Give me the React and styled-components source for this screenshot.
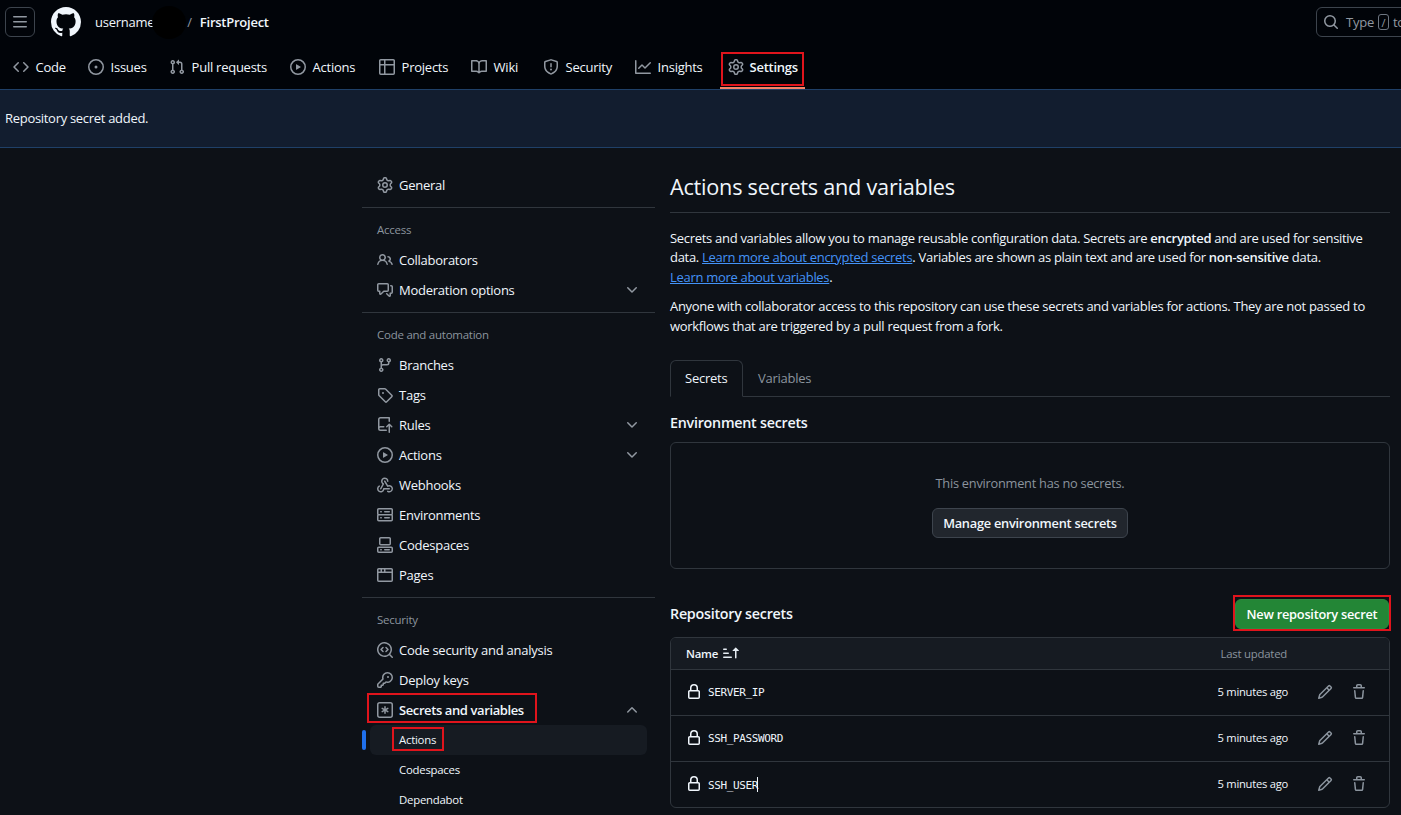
import React from "react";
import styled, { createGlobalStyle } from "styled-components";

const FONT = `"Open Sans", "Noto Sans", sans-serif`;
const RED = "#e0141c";

const octicon = (...paths) => ({ size = 16 }) => (
  <svg width={size} height={size} viewBox="0 0 16 16" fill="currentColor">
    {paths.map((d) => <path key={d} d={d} />)}
  </svg>
);
const ThreeBars = octicon("M1 2.75A.75.75 0 0 1 1.75 2h12.5a.75.75 0 0 1 0 1.5H1.75A.75.75 0 0 1 1 2.75Zm0 5A.75.75 0 0 1 1.75 7h12.5a.75.75 0 0 1 0 1.5H1.75A.75.75 0 0 1 1 7.75ZM1.75 12h12.5a.75.75 0 0 1 0 1.5H1.75a.75.75 0 0 1 0-1.5Z");
const MarkGithub = octicon("M8 0c4.42 0 8 3.58 8 8a8.013 8.013 0 0 1-5.45 7.59c-.4.08-.55-.17-.55-.38 0-.27.01-1.13.01-2.2 0-.75-.25-1.23-.54-1.48 1.78-.2 3.65-.88 3.65-3.95 0-.88-.31-1.59-.82-2.15.08-.2.36-1.02-.08-2.12 0 0-.67-.22-2.2.82-.64-.18-1.32-.27-2-.27-.68 0-1.36.09-2 .27-1.53-1.03-2.2-.82-2.2-.82-.44 1.1-.16 1.92-.08 2.12-.51.56-.82 1.28-.82 2.15 0 3.06 1.86 3.75 3.64 3.95-.23.2-.44.55-.51 1.07-.46.21-1.61.55-2.33-.66-.15-.24-.6-.83-1.23-.82-.67.01-.27.38.01.53.34.19.73.9.82 1.13.16.45.68 1.31 2.69.94 0 .67.01 1.3.01 1.49 0 .21-.15.45-.55.38A7.995 7.995 0 0 1 0 8c0-4.42 3.58-8 8-8Z");
const Webhook = octicon(
  "M5.5 4.25a2.25 2.25 0 0 1 4.5 0 .75.75 0 0 0 1.5 0 3.75 3.75 0 1 0-6.14 2.889l-2.272 4.258a.75.75 0 0 0 1.324.706L7 7.25a.75.75 0 0 0-.309-1.015A2.25 2.25 0 0 1 5.5 4.25Z",
  "M7.364 3.607a.75.75 0 0 1 1.03.257l2.608 4.349a3.75 3.75 0 1 1-.628 6.785.75.75 0 0 1 .752-1.299 2.25 2.25 0 1 0-.033-3.88.75.75 0 0 1-1.03-.256L7.107 4.636a.75.75 0 0 1 .257-1.03Z",
  "M2.9 8.776A.75.75 0 0 1 2.625 9.8 2.25 2.25 0 1 0 6 11.75a.75.75 0 0 1 .75-.751h5.5a.75.75 0 0 1 0 1.5H7.425a3.751 3.751 0 1 1-5.55-3.998.75.75 0 0 1 1.024.274Z"
);
const KeyAsterisk = octicon(
  "M0 2.75A2.75 2.75 0 0 1 2.75 0h10.5A2.75 2.75 0 0 1 16 2.75v10.5A2.75 2.75 0 0 1 13.25 16H2.75A2.75 2.75 0 0 1 0 13.25ZM2.75 1.5c-.69 0-1.25.56-1.25 1.25v10.5c0 .69.56 1.25 1.25 1.25h10.5c.69 0 1.25-.56 1.25-1.25V2.75c0-.69-.56-1.25-1.25-1.25Z",
  "M8 4a.75.75 0 0 1 .75.75V6.7l1.69-.975a.75.75 0 0 1 .75 1.3L9.5 8l1.69.976a.75.75 0 0 1-.75 1.298L8.75 9.3v1.951a.75.75 0 0 1-1.5 0V9.3l-1.69.975a.75.75 0 0 1-.75-1.299L6.5 8l-1.69-.975a.75.75 0 0 1 .75-1.3l1.69.976V4.75A.75.75 0 0 1 8 4Z"
);
const Gear = octicon("M8 0a8.2 8.2 0 0 1 .701.031C9.444.095 9.99.645 10.16 1.29l.288 1.107c.018.066.079.158.212.224.231.114.454.243.668.386.123.082.233.09.299.071l1.103-.303c.644-.176 1.392.021 1.82.63.27.385.506.792.704 1.218.315.675.111 1.422-.364 1.891l-.814.806c-.049.048-.098.147-.088.294.016.257.016.515 0 .772-.01.147.038.246.088.294l.814.806c.475.469.679 1.216.364 1.891a7.977 7.977 0 0 1-.704 1.217c-.428.61-1.176.807-1.82.63l-1.102-.302c-.067-.019-.177-.011-.3.071a5.909 5.909 0 0 1-.668.386c-.133.066-.194.158-.211.224l-.29 1.106c-.168.646-.715 1.196-1.458 1.26a8.006 8.006 0 0 1-1.402 0c-.743-.064-1.289-.614-1.458-1.26l-.289-1.106c-.018-.066-.079-.158-.212-.224a5.738 5.738 0 0 1-.668-.386c-.123-.082-.233-.09-.299-.071l-1.103.303c-.644.176-1.392-.021-1.82-.63a8.12 8.12 0 0 1-.704-1.218c-.315-.675-.111-1.422.363-1.891l.815-.806c.05-.048.098-.147.088-.294a6.214 6.214 0 0 1 0-.772c.01-.147-.038-.246-.088-.294l-.815-.806C.635 6.045.431 5.298.746 4.623a7.92 7.92 0 0 1 .704-1.217c.428-.61 1.176-.807 1.82-.63l1.102.302c.067.019.177.011.3-.071.214-.143.437-.272.668-.386.133-.066.194-.158.211-.224l.29-1.106C6.009.645 6.556.095 7.299.03 7.53.01 7.764 0 8 0Zm-.571 1.525c-.036.003-.108.036-.137.146l-.289 1.105c-.147.561-.549.967-.998 1.189-.173.086-.34.183-.5.29-.417.278-.97.423-1.529.27l-1.103-.303c-.109-.03-.175.016-.195.045-.22.312-.412.644-.573.99-.014.031-.021.11.059.19l.815.806c.411.406.562.957.53 1.456a4.709 4.709 0 0 0 0 .582c.032.499-.119 1.05-.53 1.456l-.815.806c-.081.08-.073.159-.059.19.162.346.353.677.573.989.02.03.085.076.195.046l1.102-.303c.56-.153 1.113-.008 1.53.27.161.107.328.204.501.29.447.222.85.629.997 1.189l.289 1.105c.029.109.101.143.137.146a6.6 6.6 0 0 0 1.142 0c.036-.003.108-.036.137-.146l.289-1.105c.147-.561.549-.967.998-1.189.173-.086.34-.183.5-.29.417-.278.97-.423 1.529-.27l1.103.303c.109.029.175-.016.195-.045.22-.313.411-.644.573-.99.014-.031.021-.11-.059-.19l-.815-.806c-.411-.406-.562-.957-.53-1.456a4.709 4.709 0 0 0 0-.582c-.032-.499.119-1.05.53-1.456l.815-.806c.081-.08.073-.159.059-.19a6.464 6.464 0 0 0-.573-.989c-.02-.03-.085-.076-.195-.046l-1.102.303c-.56.153-1.113.008-1.53-.27a4.44 4.44 0 0 0-.501-.29c-.447-.222-.85-.629-.997-1.189l-.289-1.105c-.029-.11-.101-.143-.137-.146a6.6 6.6 0 0 0-1.142 0ZM11 8a3 3 0 1 1-6 0 3 3 0 0 1 6 0ZM9.5 8a1.5 1.5 0 1 0-3.001.001A1.5 1.5 0 0 0 9.5 8Z");
const Code = octicon("m11.28 3.22 4.25 4.25a.75.75 0 0 1 0 1.06l-4.25 4.25a.749.749 0 0 1-1.275-.326.749.749 0 0 1 .215-.734L13.94 8l-3.72-3.72a.749.749 0 0 1 .326-1.275.749.749 0 0 1 .734.215Zm-6.56 0a.751.751 0 0 1 1.042.018.751.751 0 0 1 .018 1.042L2.06 8l3.72 3.72a.749.749 0 0 1-.326 1.275.749.749 0 0 1-.734-.215L.47 8.53a.75.75 0 0 1 0-1.06Z");
const IssueOpened = octicon("M8 9.5a1.5 1.5 0 1 0 0-3 1.5 1.5 0 0 0 0 3Z", "M8 0a8 8 0 1 1 0 16A8 8 0 0 1 8 0ZM1.5 8a6.5 6.5 0 1 0 13 0 6.5 6.5 0 0 0-13 0Z");
const PullRequest = octicon("M1.5 3.25a2.25 2.25 0 1 1 3 2.122v5.256a2.251 2.251 0 1 1-1.5 0V5.372A2.25 2.25 0 0 1 1.5 3.25Zm5.677-.177L9.573.677A.25.25 0 0 1 10 .854V2.5h1A2.5 2.5 0 0 1 13.5 5v5.628a2.251 2.251 0 1 1-1.5 0V5a1 1 0 0 0-1-1h-1v1.646a.25.25 0 0 1-.427.177L7.177 3.427a.25.25 0 0 1 0-.354ZM3.75 2.5a.75.75 0 1 0 0 1.5.75.75 0 0 0 0-1.5Zm0 9.5a.75.75 0 1 0 0 1.5.75.75 0 0 0 0-1.5Zm8.25.75a.75.75 0 1 0 1.5 0 .75.75 0 0 0-1.5 0Z");
const Play = octicon("M8 0a8 8 0 1 1 0 16A8 8 0 0 1 8 0ZM1.5 8a6.5 6.5 0 1 0 13 0 6.5 6.5 0 0 0-13 0Zm4.879-2.773 4.264 2.559a.25.25 0 0 1 0 .428l-4.264 2.559A.25.25 0 0 1 6 10.559V5.442a.25.25 0 0 1 .379-.215Z");
const Table = octicon("M0 1.75C0 .784.784 0 1.75 0h12.5C15.216 0 16 .784 16 1.75v12.5A1.75 1.75 0 0 1 14.25 16H1.75A1.75 1.75 0 0 1 0 14.25ZM6.5 6.5v8h7.75a.25.25 0 0 0 .25-.25V6.5Zm8-1.5V1.75a.25.25 0 0 0-.25-.25H6.5V5Zm-13 1.5v7.75c0 .138.112.25.25.25H5v-8ZM5 5V1.5H1.75a.25.25 0 0 0-.25.25V5Z");
const Book = octicon("M0 1.75A.75.75 0 0 1 .75 1h4.253c1.227 0 2.317.59 3 1.501A3.743 3.743 0 0 1 11.006 1h4.245a.75.75 0 0 1 .75.75v10.5a.75.75 0 0 1-.75.75h-4.507a2.25 2.25 0 0 0-1.591.659l-.622.621a.75.75 0 0 1-1.06 0l-.622-.621A2.25 2.25 0 0 0 5.258 13H.75a.75.75 0 0 1-.75-.75Zm7.251 10.324.004-5.073-.002-2.253A2.25 2.25 0 0 0 5.003 2.5H1.5v9h3.757a3.75 3.75 0 0 1 1.994.574ZM8.755 4.75l-.004 7.322a3.752 3.752 0 0 1 1.992-.572H14.5v-9h-3.495a2.25 2.25 0 0 0-2.25 2.25Z");
const Shield = octicon("M7.467.133a1.748 1.748 0 0 1 1.066 0l5.25 1.68A1.75 1.75 0 0 1 15 3.48V7c0 1.566-.32 3.182-1.303 4.682-.983 1.498-2.585 2.813-5.032 3.855a1.697 1.697 0 0 1-1.33 0c-2.447-1.042-4.049-2.357-5.032-3.855C1.32 10.182 1 8.566 1 7V3.48a1.75 1.75 0 0 1 1.217-1.667Zm.61 1.429a.25.25 0 0 0-.153 0l-5.25 1.68a.25.25 0 0 0-.174.238V7c0 1.358.275 2.666 1.057 3.86.784 1.194 2.121 2.34 4.366 3.297a.196.196 0 0 0 .154 0c2.245-.956 3.582-2.104 4.366-3.298C13.225 9.666 13.5 8.36 13.5 7V3.48a.251.251 0 0 0-.174-.237l-5.25-1.68ZM8.75 4.75v3a.75.75 0 0 1-1.5 0v-3a.75.75 0 0 1 1.5 0ZM9 10.5a1 1 0 1 1-2 0 1 1 0 0 1 2 0Z");
const Graph = octicon("M1.5 1.75V13.5h13.75a.75.75 0 0 1 0 1.5H.75a.75.75 0 0 1-.75-.75V1.75a.75.75 0 0 1 1.5 0Zm14.28 2.53-5.25 5.25a.75.75 0 0 1-1.06 0L7 7.06 4.28 9.78a.751.751 0 0 1-1.042-.018.751.751 0 0 1-.018-1.042l3.25-3.25a.75.75 0 0 1 1.06 0L10 7.94l4.72-4.72a.751.751 0 0 1 1.042.018.751.751 0 0 1 .018 1.042Z");
const People = octicon("M2 5.5a3.5 3.5 0 1 1 5.898 2.549 5.508 5.508 0 0 1 3.034 4.084.75.75 0 1 1-1.482.235 4 4 0 0 0-7.9 0 .75.75 0 0 1-1.482-.236A5.507 5.507 0 0 1 3.102 8.05 3.493 3.493 0 0 1 2 5.5ZM11 4a3.001 3.001 0 0 1 2.22 5.018 5.01 5.01 0 0 1 2.56 3.012.749.749 0 0 1-.885.954.752.752 0 0 1-.549-.514 3.507 3.507 0 0 0-2.522-2.372.75.75 0 0 1-.574-.73v-.352a.75.75 0 0 1 .416-.672A1.5 1.5 0 0 0 11 5.5.75.75 0 0 1 11 4Zm-5.5-.5a2 2 0 1 0-.001 3.999A2 2 0 0 0 5.5 3.5Z");
const CommentDiscussion = octicon("M1.75 1h8.5c.966 0 1.75.784 1.75 1.75v5.5A1.75 1.75 0 0 1 10.25 10H7.061l-2.574 2.573A1.458 1.458 0 0 1 2 11.543V10h-.25A1.75 1.75 0 0 1 0 8.25v-5.5C0 1.784.784 1 1.75 1ZM1.5 2.75v5.5c0 .138.112.25.25.25h1a.75.75 0 0 1 .75.75v2.19l2.72-2.72a.749.749 0 0 1 .53-.22h3.5a.25.25 0 0 0 .25-.25v-5.5a.25.25 0 0 0-.25-.25h-8.5a.25.25 0 0 0-.25.25Zm13 2a.25.25 0 0 0-.25-.25h-.5a.75.75 0 0 1 0-1.5h.5c.966 0 1.75.784 1.75 1.75v5.5A1.75 1.75 0 0 1 14.25 12H14v1.543a1.458 1.458 0 0 1-2.487 1.03L9.22 12.28a.749.749 0 0 1 .326-1.275.749.749 0 0 1 .734.215l2.22 2.22v-2.19a.75.75 0 0 1 .75-.75h1a.25.25 0 0 0 .25-.25Z");
const GitBranch = octicon("M9.5 3.25a2.25 2.25 0 1 1 3 2.122V6A2.5 2.5 0 0 1 10 8.5H6a1 1 0 0 0-1 1v1.128a2.251 2.251 0 1 1-1.5 0V5.372a2.25 2.25 0 1 1 1.5 0v1.836A2.493 2.493 0 0 1 6 7h4a1 1 0 0 0 1-1v-.628A2.25 2.25 0 0 1 9.5 3.25Zm-6 0a.75.75 0 1 0 1.5 0 .75.75 0 0 0-1.5 0Zm8.25-.75a.75.75 0 1 0 0 1.5.75.75 0 0 0 0-1.5ZM4.25 12a.75.75 0 1 0 0 1.5.75.75 0 0 0 0-1.5Z");
const Tag = octicon("M1 7.775V2.75C1 1.784 1.784 1 2.75 1h5.025c.464 0 .91.184 1.238.513l6.25 6.25a1.75 1.75 0 0 1 0 2.474l-5.026 5.026a1.75 1.75 0 0 1-2.474 0l-6.25-6.25A1.752 1.752 0 0 1 1 7.775Zm1.5 0c0 .066.026.13.073.177l6.25 6.25a.25.25 0 0 0 .354 0l5.025-5.025a.25.25 0 0 0 0-.354l-6.25-6.25a.25.25 0 0 0-.177-.073H2.75a.25.25 0 0 0-.25.25ZM6 5a1 1 0 1 1 0 2 1 1 0 0 1 0-2Z");
const RepoPush = octicon("M1 2.5A2.5 2.5 0 0 1 3.5 0h8.75a.75.75 0 0 1 .75.75v3.5a.75.75 0 0 1-1.5 0V1.5h-8a1 1 0 0 0-1 1v6.708A2.493 2.493 0 0 1 3.5 9h3.25a.75.75 0 0 1 0 1.5H3.5a1 1 0 0 0 0 2h5.75a.75.75 0 0 1 0 1.5H3.5A2.5 2.5 0 0 1 1 11.5Zm13.23 7.79h-.001l-1.224-1.224v6.184a.75.75 0 0 1-1.5 0V9.066L10.28 10.29a.75.75 0 0 1-1.06-1.061l2.505-2.504a.75.75 0 0 1 1.06 0L15.29 9.23a.751.751 0 0 1-.018 1.042.751.751 0 0 1-1.042.018Z");
const Server = octicon("M1.75 1h12.5c.966 0 1.75.784 1.75 1.75v4c0 .372-.116.717-.314 1 .198.283.314.628.314 1v4a1.75 1.75 0 0 1-1.75 1.75H1.75A1.75 1.75 0 0 1 0 12.75v-4c0-.358.109-.707.314-1a1.739 1.739 0 0 1-.314-1v-4C0 1.784.784 1 1.75 1ZM1.5 2.75v4c0 .138.112.25.25.25h12.5a.25.25 0 0 0 .25-.25v-4a.25.25 0 0 0-.25-.25H1.75a.25.25 0 0 0-.25.25Zm.25 5.75a.25.25 0 0 0-.25.25v4c0 .138.112.25.25.25h12.5a.25.25 0 0 0 .25-.25v-4a.25.25 0 0 0-.25-.25ZM7 4.75A.75.75 0 0 1 7.75 4h4.5a.75.75 0 0 1 0 1.5h-4.5A.75.75 0 0 1 7 4.75ZM7.75 10h4.5a.75.75 0 0 1 0 1.5h-4.5a.75.75 0 0 1 0-1.5ZM3 4.75A.75.75 0 0 1 3.75 4h.5a.75.75 0 0 1 0 1.5h-.5A.75.75 0 0 1 3 4.75ZM3.75 10h.5a.75.75 0 0 1 0 1.5h-.5a.75.75 0 0 1 0-1.5Z");
const Codespaces = octicon(
  "M0 11.25c0-.966.784-1.75 1.75-1.75h12.5c.966 0 1.75.784 1.75 1.75v3A1.75 1.75 0 0 1 14.25 16H1.75A1.75 1.75 0 0 1 0 14.25Zm2-9.5C2 .784 2.784 0 3.75 0h8.5C13.216 0 14 .784 14 1.75v5a1.75 1.75 0 0 1-1.75 1.75h-8.5A1.75 1.75 0 0 1 2 6.75Zm1.75-.25a.25.25 0 0 0-.25.25v5c0 .138.112.25.25.25h8.5a.25.25 0 0 0 .25-.25v-5a.25.25 0 0 0-.25-.25Zm-2 9.5a.25.25 0 0 0-.25.25v3c0 .138.112.25.25.25h12.5a.25.25 0 0 0 .25-.25v-3a.25.25 0 0 0-.25-.25Z",
  "M7 12.75a.75.75 0 0 1 .75-.75h4.5a.75.75 0 0 1 0 1.5h-4.5a.75.75 0 0 1-.75-.75Zm-4 0a.75.75 0 0 1 .75-.75h.5a.75.75 0 0 1 0 1.5h-.5a.75.75 0 0 1-.75-.75Z"
);
const Browser = octicon("M0 2.75C0 1.784.784 1 1.75 1h12.5c.966 0 1.75.784 1.75 1.75v10.5A1.75 1.75 0 0 1 14.25 15H1.75A1.75 1.75 0 0 1 0 13.25ZM14.5 6h-13v7.25c0 .138.112.25.25.25h12.5a.25.25 0 0 0 .25-.25Zm-6-3.5v2h6V2.75a.25.25 0 0 0-.25-.25ZM5 2.5v2h2v-2Zm-3.25 0a.25.25 0 0 0-.25.25V4.5h2v-2Z");
const Codescan = octicon(
  "M8.47 4.97a.75.75 0 0 0 0 1.06L9.94 7.5 8.47 8.97a.75.75 0 1 0 1.06 1.06l2-2a.75.75 0 0 0 0-1.06l-2-2a.75.75 0 0 0-1.06 0ZM6.53 6.03a.75.75 0 0 0-1.06-1.06l-2 2a.75.75 0 0 0 0 1.06l2 2a.75.75 0 1 0 1.06-1.06L5.06 7.5l1.47-1.47Z",
  "M12.246 13.307a7.501 7.501 0 1 1 1.06-1.06l2.474 2.473a.749.749 0 0 1-.326 1.275.749.749 0 0 1-.734-.215ZM1.5 7.5a6.002 6.002 0 0 0 3.608 5.504 6.002 6.002 0 0 0 6.486-1.117.748.748 0 0 1 .292-.293A6 6 0 1 0 1.5 7.5Z"
);
const Key = octicon("M10.5 0a5.499 5.499 0 1 1-1.288 10.848l-.932.932a.749.749 0 0 1-.53.22H7v.75a.749.749 0 0 1-.22.53l-.5.5a.749.749 0 0 1-.53.22H5v.75a.749.749 0 0 1-.22.53l-.5.5a.749.749 0 0 1-.53.22h-2A1.75 1.75 0 0 1 0 14.25v-2c0-.199.079-.389.22-.53l4.932-4.932A5.5 5.5 0 0 1 10.5 0Zm-4 5.5c-.001.431.069.86.205 1.269a.75.75 0 0 1-.181.768L1.5 12.56v1.69c0 .138.112.25.25.25h1.69l.06-.06v-1.19a.75.75 0 0 1 .75-.75h1.19l.06-.06v-1.19a.75.75 0 0 1 .75-.75h1.19l1.023-1.025a.75.75 0 0 1 .768-.18A4 4 0 1 0 6.5 5.5ZM11 6a1 1 0 1 1 0-2 1 1 0 0 1 0 2Z");
const Lock = octicon("M4 4a4 4 0 0 1 8 0v2h.25c.966 0 1.75.784 1.75 1.75v5.5A1.75 1.75 0 0 1 12.25 15h-8.5A1.75 1.75 0 0 1 2 13.25v-5.5C2 6.784 2.784 6 3.75 6H4Zm8.25 3.5h-8.5a.25.25 0 0 0-.25.25v5.5c0 .138.112.25.25.25h8.5a.25.25 0 0 0 .25-.25v-5.5a.25.25 0 0 0-.25-.25ZM10.5 6V4a2.5 2.5 0 1 0-5 0v2Z");
const Pencil = octicon("M11.013 1.427a1.75 1.75 0 0 1 2.474 0l1.086 1.086a1.75 1.75 0 0 1 0 2.474l-8.61 8.61c-.21.21-.47.364-.756.445l-3.251.93a.75.75 0 0 1-.927-.928l.929-3.25c.081-.286.235-.547.445-.758l8.61-8.61Zm.176 4.823L9.75 4.81l-6.286 6.287a.253.253 0 0 0-.064.108l-.558 1.953 1.953-.558a.253.253 0 0 0 .108-.064Zm1.238-3.763a.25.25 0 0 0-.354 0L10.811 3.75l1.439 1.44 1.263-1.263a.25.25 0 0 0 0-.354Z");
const Trash = octicon("M11 1.75V3h2.25a.75.75 0 0 1 0 1.5H2.75a.75.75 0 0 1 0-1.5H5V1.75C5 .784 5.784 0 6.75 0h2.5C10.216 0 11 .784 11 1.75ZM4.496 6.675l.66 6.6a.25.25 0 0 0 .249.225h5.19a.25.25 0 0 0 .249-.225l.66-6.6a.75.75 0 0 1 1.492.149l-.66 6.6A1.748 1.748 0 0 1 10.595 15h-5.19a1.75 1.75 0 0 1-1.741-1.575l-.66-6.6a.75.75 0 1 1 1.492-.15ZM6.5 1.75V3h3V1.75a.25.25 0 0 0-.25-.25h-2.5a.25.25 0 0 0-.25.25Z");
const SortAsc = octicon("m12.927 2.573 3 3A.25.25 0 0 1 15.75 6H13.5v6.75a.75.75 0 0 1-1.5 0V6H9.75a.25.25 0 0 1-.177-.427l3-3a.25.25 0 0 1 .354 0ZM0 12.25a.75.75 0 0 1 .75-.75h7.5a.75.75 0 0 1 0 1.5H.75a.75.75 0 0 1-.75-.75Zm0-4a.75.75 0 0 1 .75-.75h4.5a.75.75 0 0 1 0 1.5H.75A.75.75 0 0 1 0 8.25Zm0-4a.75.75 0 0 1 .75-.75h2.5a.75.75 0 0 1 0 1.5H.75A.75.75 0 0 1 0 4.25Z");
const Search = octicon("M10.68 11.74a6 6 0 0 1-7.922-8.982 6 6 0 0 1 8.982 7.922l3.04 3.04a.749.749 0 0 1-.326 1.275.749.749 0 0 1-.734-.215ZM11.5 7a4.499 4.499 0 1 0-8.997 0A4.499 4.499 0 0 0 11.5 7Z");
const ChevronDown = octicon("M12.78 5.22a.749.749 0 0 1 0 1.06l-4.25 4.25a.749.749 0 0 1-1.06 0L3.22 6.28a.749.749 0 1 1 1.06-1.06L8 8.939l3.72-3.719a.749.749 0 0 1 1.06 0Z");
const ChevronUp = octicon("M3.22 10.53a.749.749 0 0 1 0-1.06l4.25-4.25a.749.749 0 0 1 1.06 0l4.25 4.25a.749.749 0 1 1-1.06 1.06L8 6.811 4.28 10.53a.749.749 0 0 1-1.06 0Z");

const Global = createGlobalStyle`
  html, body { margin: 0; height: 815px; overflow: hidden; background: #0d1117; }
  body { font-family: ${FONT}; font-size: 13px; letter-spacing: -0.25px; color: #f0f6fc; }
  button { letter-spacing: inherit; }
  * { box-sizing: border-box; }
`;

const Header = styled.header`
  background: #010409;
  height: 89px;
  position: relative;
  overflow: hidden;
`;
const TopRow = styled.div`
  display: flex;
  align-items: center;
  height: 44px;
  padding: 0 0 0 5px;
`;
const MenuButton = styled.button`
  width: 30px;
  height: 30px;
  padding: 0;
  background: transparent;
  border: 1px solid #3d444d;
  border-radius: 6px;
  color: #9198a1;
  display: flex;
  align-items: center;
  justify-content: center;
`;
const Logo = styled.div`
  display: flex;
  margin-left: 16px;
  color: #f0f6fc;
`;
const Crumb = styled.span`
  margin-left: ${(p) => p.$ml}px;
  font-weight: ${(p) => (p.$bold ? 600 : 400)};
  color: ${(p) => p.$color || "#f0f6fc"};
`;
const Blob = styled.div`
  position: absolute;
  left: 152px;
  top: 6px;
  width: 34px;
  height: 33px;
  border-radius: 50%;
  background: #000;
`;
const SearchBox = styled.div`
  position: absolute;
  left: 1316px;
  top: 7px;
  width: 200px;
  height: 30px;
  border: 1px solid #3d444d;
  border-radius: 6px;
  display: flex;
  align-items: center;
  padding-left: 6px;
  color: #9198a1;
  gap: 7px;
`;
const KeyHint = styled.span`
  border: 1px solid #6e7681;
  border-radius: 3px;
  width: 11px;
  height: 16px;
  margin: 0 4px 0 4px;
  display: inline-flex;
  align-items: center;
  justify-content: center;
  font-size: 11px;
`;
const SearchText = styled.span`
  display: flex;
  align-items: center;
`;
const NavRow = styled.nav`
  display: flex;
  padding-left: 5px;
  height: 45px;
`;
const NavItem = styled.a`
  position: relative;
  display: flex;
  align-items: center;
  gap: ${(p) => (p.$active ? 5.5 : 6.6)}px;
  padding: 0 7px 0 8px;
  width: ${(p) => p.$w}px;
  font-weight: ${(p) => (p.$active ? 600 : 400)};
  color: #f0f6fc;
  white-space: nowrap;
  svg { color: #9198a1; flex: none; }
  ${(p) =>
    p.$active &&
    `
    &::before { content: ""; position: absolute; left: 1px; right: 1px; top: 8px; height: 30px; border: 2px solid ${RED}; }
    &::after { content: ""; position: absolute; left: 0; right: 0; bottom: 0; height: 2px; background: #f78166; }
  `}
`;
const Flash = styled.div`
  height: 59px;
  background: #121d2f;
  border-top: 1px solid #1f4068;
  border-bottom: 1px solid #1f4068;
  display: flex;
  align-items: center;
  padding: 0 0 1px 5px;
  letter-spacing: -0.3px;
`;
const Page = styled.div`
  display: flex;
  padding-left: 362px;
  padding-right: 11px;
`;
const Sidebar = styled.aside`
  width: 293px;
  flex: none;
  padding-top: 22px;
`;
const Divider = styled.div`
  height: 1px;
  background: #30363d;
  margin: 7px 0 0;
`;
const SectionTitle = styled.div`
  height: 37px;
  padding: 14px 0 0 15px;
  line-height: 16px;
  font-size: 11.5px;
  font-weight: 400;
  color: #8b949e;
`;
const SideRow = styled.div`
  position: relative;
  height: 30px;
  display: flex;
  align-items: center;
  padding-left: 15px;
  gap: 6px;
  color: #f0f6fc;
  font-weight: ${(p) => (p.$bold ? 600 : 400)};
  letter-spacing: ${(p) => (p.$bold ? -0.4 : -0.25)}px;
  svg { color: #9198a1; flex: none; }
`;
const SideLabel = styled.span`
  position: relative;
  white-space: nowrap;
`;
const Chevron = styled.span`
  position: absolute;
  left: 262px;
  top: 7px;
  display: flex;
  color: #9198a1;
`;
const SubRow = styled.div`
  position: relative;
  height: 30px;
  margin: 0 8px;
  padding: 0 0 1px 29px;
  display: flex;
  align-items: center;
  font-size: 11.4px;
  border-radius: 6px;
  background: ${(p) => (p.$active ? "#161b22" : "transparent")};
  ${(p) =>
    p.$active &&
    `
    &::before { content: ""; position: absolute; left: -8px; top: 5px; width: 4px; height: 20px; border-radius: 6px; background: #1f6feb; }
  `}
`;
const RedMark = styled.span`
  position: absolute;
  pointer-events: none;
  border: 2px solid ${RED};
  top: ${(p) => p.$t}px;
  left: ${(p) => p.$l}px;
  width: ${(p) => p.$w}px;
  height: ${(p) => p.$h}px;
`;
const Main = styled.main`
  flex: 1;
  margin-left: 15px;
  padding-top: 21px;
  min-width: 0;
`;
const PageTitle = styled.h1`
  margin: 0;
  font-size: 21.7px;
  font-weight: 400;
  line-height: 36px;
  padding-bottom: 7px;
  border-bottom: 1px solid #30363d;
  color: #f0f6fc;
`;
const Para = styled.p`
  margin: ${(p) => p.$mt}px 0 0;
  line-height: 19.5px;
  letter-spacing: -0.3px;
  color: #f0f6fc;
`;
const Strong = styled.strong`
  font-weight: 600;
`;
const Link = styled.a`
  color: #4493f8;
  text-decoration: underline;
`;
const Tabs = styled.div`
  display: flex;
  margin-top: 23.5px;
  height: 37px;
  border-bottom: 1px solid #30363d;
`;
const Tab = styled.div`
  height: 37px;
  display: flex;
  align-items: center;
  padding: 0 14px;
  width: ${(p) => p.$w}px;
  border-radius: 6px 6px 0 0;
  color: ${(p) => (p.$active ? "#f0f6fc" : "#8b949e")};
  background: ${(p) => (p.$active ? "#0d1117" : "transparent")};
  border: 1px solid ${(p) => (p.$active ? "#30363d" : "transparent")};
  border-bottom-color: ${(p) => (p.$active ? "#0d1117" : "transparent")};
`;
const SectionHeading = styled.h3`
  margin: 0;
  font-size: 14.3px;
  font-weight: 600;
  line-height: 24px;
`;
const EnvHeading = styled(SectionHeading)`
  margin-top: 14px;
`;
const EnvBox = styled.div`
  margin-top: 7px;
  height: 127px;
  border: 1px solid #30363d;
  border-radius: 6px;
  display: flex;
  flex-direction: column;
  align-items: center;
  padding-top: 30px;
`;
const EnvText = styled.div`
  color: #8b949e;
  line-height: 20px;
  font-size: 12.8px;
`;
const SecondaryButton = styled.button`
  margin-top: 15px;
  width: 196px;
  height: 30px;
  background: #21262d;
  border: 1px solid #3d444d;
  border-radius: 6px;
  font: 600 12.8px ${FONT};
  color: #f0f6fc;
  padding: 0;
`;
const RepoHeader = styled.div`
  margin-top: 30px;
  height: 31px;
  display: flex;
  align-items: center;
  justify-content: space-between;
`;
const PrimaryButton = styled.button`
  position: relative;
  margin-right: 1px;
  width: 154px;
  height: 30px;
  background: #238636;
  border: 1px solid #2b8a3e;
  border-radius: 6px;
  font: 600 12.8px ${FONT};
  color: #ffffff;
  padding: 0;
  &::after {
    content: "";
    position: absolute;
    left: -3px;
    right: -3px;
    top: -5px;
    bottom: -3px;
    border: 2.5px solid ${RED};
  }
`;
const SecretTable = styled.div`
  margin-top: 7px;
  border: 1px solid #30363d;
  border-radius: 6px;
  overflow: hidden;
`;
const TableHead = styled.div`
  height: 32px;
  background: #161b22;
  display: flex;
  align-items: center;
  padding: 0 102px 0 15px;
  justify-content: space-between;
  font-size: 11.4px;
  border-bottom: 1px solid #30363d;
`;
const NameHead = styled.span`
  display: flex;
  align-items: center;
  gap: 5px;
  font-weight: 600;
  svg { color: #e6edf3; }
`;
const MutedHead = styled.span`
  color: #8b949e;
`;
const TableRow = styled.div`
  height: ${(p) => (p.$first ? 45 : 46)}px;
  display: flex;
  align-items: center;
  padding-left: 15px;
  border-top: ${(p) => (p.$first ? "0" : "1px solid #30363d")};
`;
const SecretName = styled.code`
  position: relative;
  margin-left: 6px;
  flex: 1;
  font: 11px "DejaVu Sans Mono", monospace;
  letter-spacing: -0.37px;
  color: #f0f6fc;
`;
const Caret = styled.span`
  display: inline-block;
  width: 1px;
  height: 15px;
  background: #f0f6fc;
  vertical-align: -3px;
  margin-left: -1px;
`;
const Updated = styled.span`
  font-size: 11.2px;
  width: 110px;
  text-align: right;
  margin-right: 29px;
  padding-bottom: 2px;
`;
const IconAction = styled.span`
  display: flex;
  color: #8b949e;
  margin-right: ${(p) => p.$mr}px;
`;

const navItems = [
  [Code, "Code", 75], [IssueOpened, "Issues", 81], [PullRequest, "Pull requests", 121], [Play, "Actions", 89],
  [Table, "Projects", 92], [Book, "Wiki", 72], [Shield, "Security", 92], [Graph, "Insights", 93],
];

const Item = ({ icon: Icon, label, chevron, bold, children }) => (
  <SideRow $bold={bold}>
    <Icon size={16} />
    <SideLabel>{label}</SideLabel>
    {chevron && <Chevron>{chevron === "up" ? <ChevronUp size={16} /> : <ChevronDown size={16} />}</Chevron>}
    {children}
  </SideRow>
);

const secrets = ["SERVER_IP", "SSH_PASSWORD", "SSH_USER"];

export default function App() {
  return (
    <>
      <Global />
      <Header>
        <TopRow>
          <MenuButton><ThreeBars size={16} /></MenuButton>
          <Logo><MarkGithub size={30} /></Logo>
          <Crumb $ml={14}>username</Crumb>
          <Crumb $ml={33} $color="#9198a1">/</Crumb>
          <Crumb $ml={8} $bold>FirstProject</Crumb>
        </TopRow>
        <Blob />
        <SearchBox>
          <Search size={16} />
          <SearchText>Type<KeyHint>/</KeyHint>to search</SearchText>
        </SearchBox>
        <NavRow>
          {navItems.map(([Icon, label, w]) => (
            <NavItem key={label} $w={w}>
              <Icon size={16} />
              {label}
            </NavItem>
          ))}
          <NavItem $active $w={85}>
            <Gear size={16} />
            Settings
          </NavItem>
        </NavRow>
      </Header>
      <Flash>Repository secret added.</Flash>
      <Page>
        <Sidebar>
          <Item icon={Gear} label="General" />
          <Divider />
          <SectionTitle>Access</SectionTitle>
          <Item icon={People} label="Collaborators" />
          <Item icon={CommentDiscussion} label="Moderation options" chevron="down" />
          <Divider />
          <SectionTitle>Code and automation</SectionTitle>
          <Item icon={GitBranch} label="Branches" />
          <Item icon={Tag} label="Tags" />
          <Item icon={RepoPush} label="Rules" chevron="down" />
          <Item icon={Play} label="Actions" chevron="down" />
          <Item icon={Webhook} label="Webhooks" />
          <Item icon={Server} label="Environments" />
          <Item icon={Codespaces} label="Codespaces" />
          <Item icon={Browser} label="Pages" />
          <Divider />
          <SectionTitle>Security</SectionTitle>
          <Item icon={Codescan} label="Code security and analysis" />
          <Item icon={Key} label="Deploy keys" />
          <Item icon={KeyAsterisk} label="Secrets and variables" chevron="up" bold>
            <RedMark $l={5} $t={-2} $w={170} $h={30} />
          </Item>
          <SubRow $active>
            Actions
            <RedMark $l={22} $t={2} $w={52} $h={24} />
          </SubRow>
          <SubRow>Codespaces</SubRow>
          <SubRow>Dependabot</SubRow>
        </Sidebar>
        <Main>
          <PageTitle>Actions secrets and variables</PageTitle>
          <Para $mt={15.5}>
            Secrets and variables allow you to manage reusable configuration data. Secrets are <Strong>encrypted</Strong> and are used for sensitive data. <Link>Learn more about encrypted secrets</Link>. Variables are shown as plain text and are used for <Strong>non-sensitive</Strong> data.<br /><Link>Learn more about variables</Link>.
          </Para>
          <Para $mt={10}>
            Anyone with collaborator access to this repository can use these secrets and variables for actions. They are not passed to workflows that are triggered by a pull request from a fork.
          </Para>
          <Tabs>
            <Tab $active $w={73}>Secrets</Tab>
            <Tab>Variables</Tab>
          </Tabs>
          <EnvHeading>Environment secrets</EnvHeading>
          <EnvBox>
            <EnvText>This environment has no secrets.</EnvText>
            <SecondaryButton>Manage environment secrets</SecondaryButton>
          </EnvBox>
          <RepoHeader>
            <SectionHeading>Repository secrets</SectionHeading>
            <PrimaryButton>New repository secret</PrimaryButton>
          </RepoHeader>
          <SecretTable>
            <TableHead>
              <NameHead>Name <SortAsc size={16} /></NameHead>
              <MutedHead>Last updated</MutedHead>
            </TableHead>
            {secrets.map((s, i) => (
              <TableRow key={s} $first={i === 0}>
                <Lock size={16} />
                <SecretName>{s}{i === 2 && <Caret />}</SecretName>
                <Updated>5 minutes ago</Updated>
                <IconAction $mr={18}><Pencil size={16} /></IconAction>
                <IconAction $mr={22}><Trash size={16} /></IconAction>
              </TableRow>
            ))}
          </SecretTable>
        </Main>
      </Page>
    </>
  );
}
